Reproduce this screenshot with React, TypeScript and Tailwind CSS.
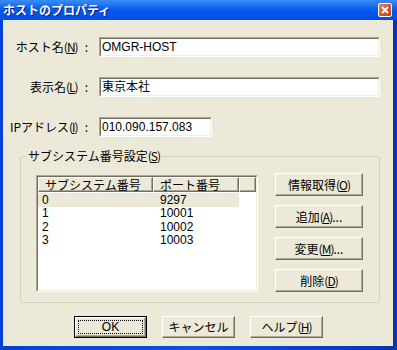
import type { ReactNode } from "react"

const FONT = "font-['Liberation_Sans','Noto_Sans_CJK_JP',sans-serif]"
const UI_FONT = "font-['Noto_Sans_CJK_JP','Liberation_Sans',sans-serif]"

// mnemonic like (N) with the letter underlined
function Key({ k }: { k: string }) {
  return (
    <span className="tracking-[-1px]">
      (<span className="underline">{k}</span>)
    </span>
  )
}

function Sunken({ className = "", children }: { className?: string; children?: ReactNode }) {
  return (
    <div className={`border border-t-[#ACA899] border-l-[#ACA899] border-r-white border-b-white ${className}`}>
      <div className="h-full w-full border border-t-[#716F64] border-l-[#716F64] border-r-[#F1EFE2] border-b-[#F1EFE2] bg-white">
        {children}
      </div>
    </div>
  )
}

function Button({ children, className = "", isDefault = false }: { children: ReactNode; className?: string; isDefault?: boolean }) {
  if (isDefault) {
    return (
      <div className={`border border-black ${className}`}>
        <div className="h-full border border-t-white border-l-white border-r-[#716F64] border-b-[#716F64] bg-[#ECE9D8] shadow-[inset_-1px_-1px_#ACA899] p-[2px]">
          <div className="h-full flex items-center justify-center border border-dotted border-black">{children}</div>
        </div>
      </div>
    )
  }
  return (
    <div
      className={`flex items-center justify-center border border-t-white border-l-white border-r-[#716F64] border-b-[#716F64] bg-[#ECE9D8] shadow-[inset_-1px_-1px_#ACA899] ${UI_FONT} ${className}`}
    >
      {children}
    </div>
  )
}

function Field({ label, value, width }: { label: ReactNode; value: string; width: string }) {
  return (
    <div className="flex items-center h-[20px]">
      <div className={`w-[86px] flex justify-end items-center ${UI_FONT}`}>
        <span>{label}</span>
        <span className="ml-[7px] mr-[1px]">:</span>
      </div>
      <Sunken className={`ml-[10px] h-[20px] ${width}`}>
        <div className="pl-[1px] leading-[16px]">{value}</div>
      </Sunken>
    </div>
  )
}

const rows = [
  { sub: "0", port: "9297" },
  { sub: "1", port: "10001" },
  { sub: "2", port: "10002" },
  { sub: "3", port: "10003" },
]

function HeaderCell({ children, className = "" }: { children?: ReactNode; className?: string }) {
  return (
    <div
      className={`h-full flex items-center border-t border-l border-t-white border-l-white border-r border-b border-r-[#716F64] border-b-[#716F64] shadow-[inset_-1px_-1px_#ACA899] ${UI_FONT} ${className}`}
    >
      {children}
    </div>
  )
}

export default function App() {
  return (
    <div className={`w-[397px] h-[350px] flex flex-col bg-[#0553E4] text-[12px] text-black ${FONT}`}>
      {/* TITLE BAR */}
      <div className="h-[20px] flex items-center justify-between pl-[3px] pr-[5px] bg-gradient-to-b from-[#3A8CF8] via-[#0558EC] to-[#0150E6]">
        <span className={`font-bold text-[12px] text-white leading-none [text-shadow:1px_1px_#0A1883] ${UI_FONT}`}>ホストのプロパティ</span>
        <div className="w-[14px] h-[14px] rounded-[2px] border border-white bg-gradient-to-br from-[#E8845F] via-[#D9542C] to-[#C4401D] flex items-center justify-center">
          <svg width="8" height="8" viewBox="0 0 8 8">
            <path d="M1 1 L7 7 M7 1 L1 7" stroke="white" strokeWidth="2" />
          </svg>
        </div>
      </div>

      {/* BODY */}
      <div className="flex-1 flex pl-[3px] pr-[4px] pb-[4px] bg-gradient-to-r from-[#0042D6] via-[#0553E4] to-[#0036B8]">
        <div className="flex-1 flex flex-col bg-[#ECE9D8]">
          <div className="mt-[17px]">
            <Field label={<>ホスト名<Key k="N" /></>} value="OMGR-HOST" width="w-[281px]" />
          </div>
          <div className="mt-[20px]">
            <Field label={<>表示名<Key k="L" /></>} value="東京本社" width="w-[281px]" />
          </div>
          <div className="mt-[20px]">
            <Field label={<>IPアドレス<Key k="I" /></>} value="010.090.157.083" width="w-[113px]" />
          </div>

          {/* GROUP */}
          <fieldset className="ml-[17px] mt-[12px] w-[360px] h-[154px] border border-[#D0D0BF] rounded-[3px]">
            <legend className={`ml-[5px] px-[2px] leading-[14px] ${UI_FONT}`}>
              サブシステム番号設定<Key k="S" />
            </legend>
            <div className="flex items-start">
              <Sunken className="ml-[15px] mt-[12px] w-[222px] h-[117px]">
                <div className="flex h-[15px] bg-[#ECE9D8]">
                  <HeaderCell className="w-[115px] pl-[6px]">サブシステム番号</HeaderCell>
                  <HeaderCell className="w-[86px] pl-[6px]">ポート番号</HeaderCell>
                  <HeaderCell className="flex-1" />
                </div>
                <div className="pt-[1px]">
                  {rows.map((r, i) => (
                    <div key={i} className={`flex w-[201px] h-[13.5px] items-center leading-none ${i === 0 ? "bg-[#ECE9D8]" : ""}`}>
                      <span className="w-[115px] pl-[4px]">{r.sub}</span>
                      <span className="pl-[7px]">{r.port}</span>
                    </div>
                  ))}
                </div>
              </Sunken>
              <div className="ml-[17px] mt-[10px] flex flex-col gap-[9px]">
                <Button className="w-[88px] h-[23px]">情報取得<Key k="O" /></Button>
                <Button className="w-[88px] h-[23px]">追加<Key k="A" />...</Button>
                <Button className="w-[88px] h-[23px]">変更<Key k="M" />...</Button>
                <Button className="w-[88px] h-[23px]">削除<Key k="D" /></Button>
              </div>
            </div>
          </fieldset>

          {/* FOOTER */}
          <div className="mt-[13px] flex justify-center gap-[15px] pl-[1px]">
            <Button className="w-[73px] h-[22px]" isDefault>OK</Button>
            <Button className="w-[73px] h-[22px]">キャンセル</Button>
            <Button className="w-[73px] h-[22px]">ヘルプ<Key k="H" /></Button>
          </div>
        </div>
      </div>
    </div>
  )
}
